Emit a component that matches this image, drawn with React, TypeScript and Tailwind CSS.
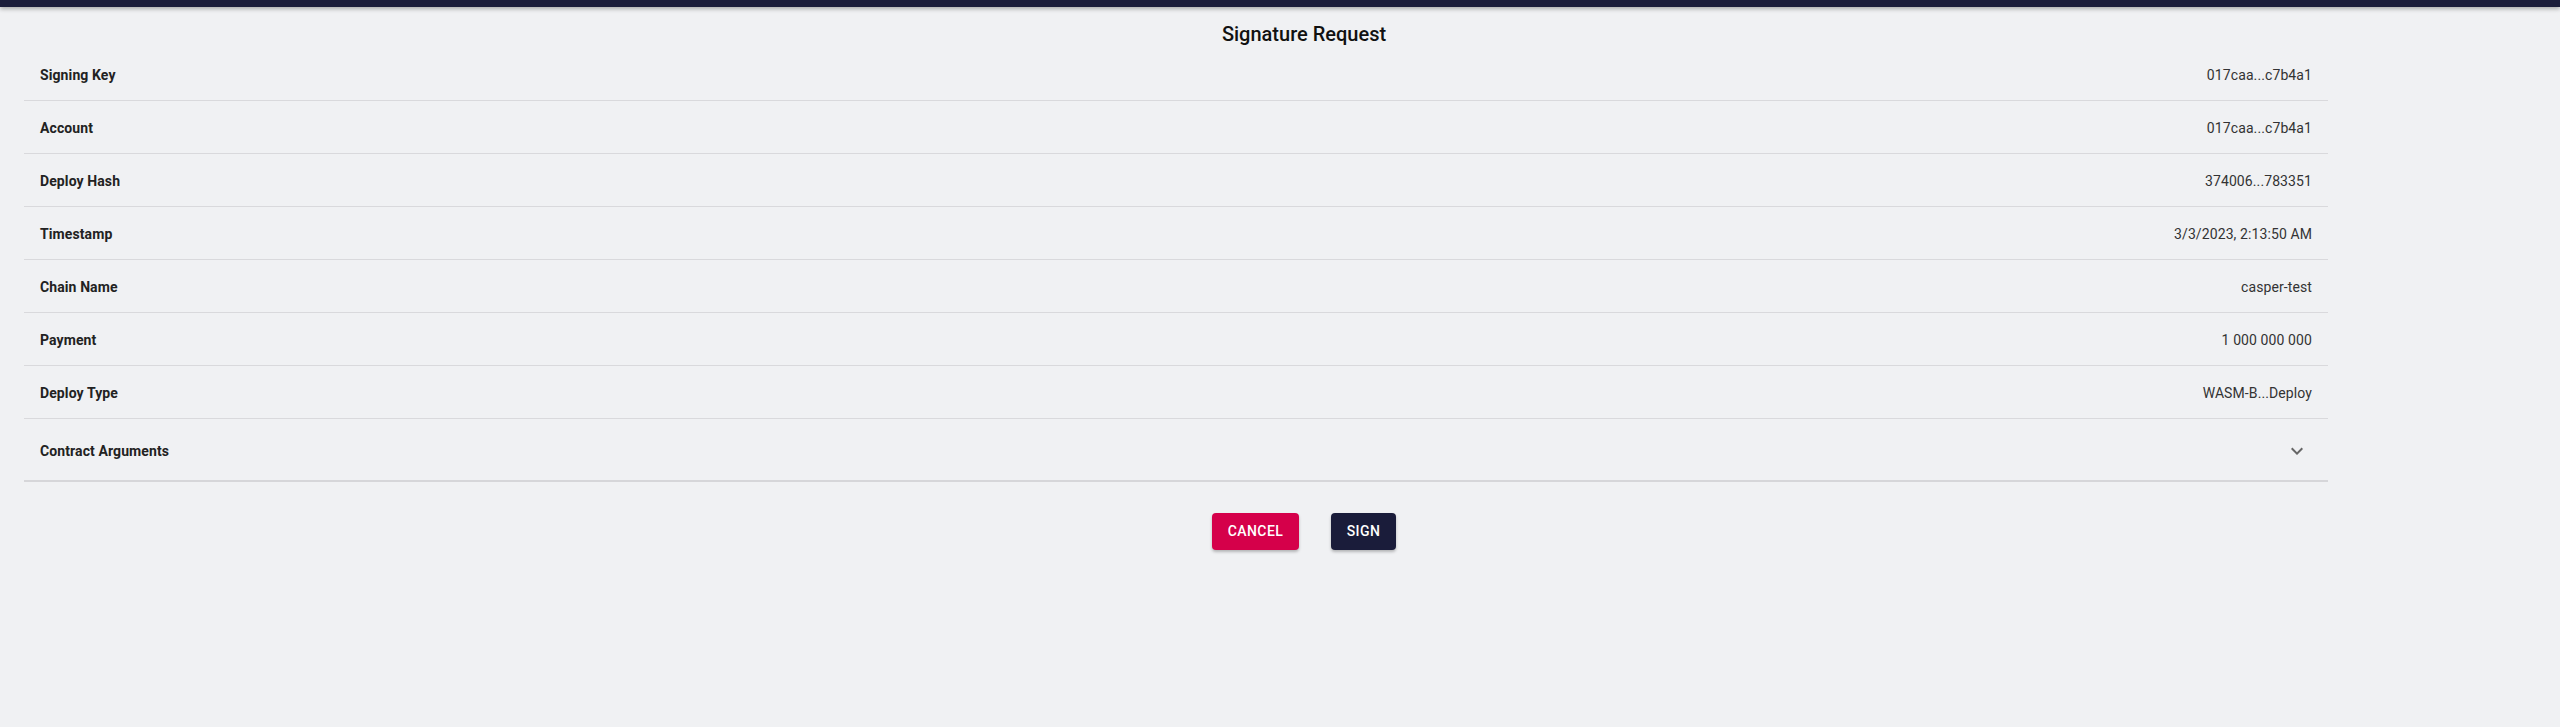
import React from "react";

const rows: [string, string][] = [
  ["Signing Key", "017caa...c7b4a1"],
  ["Account", "017caa...c7b4a1"],
  ["Deploy Hash", "374006...783351"],
  ["Timestamp", "3/3/2023, 2:13:50 AM"],
  ["Chain Name", "casper-test"],
  ["Payment", "1 000 000 000"],
  ["Deploy Type", "WASM-B...Deploy"],
];

export default function App() {
  return (
    <div
      className="min-h-[727px] w-[2560px] bg-[#f0f1f3] text-[#222]"
      style={{ fontFamily: "Roboto, 'Liberation Sans', sans-serif" }}
    >
      <div className="h-[7px] bg-[#1a1c3a] shadow-[0_2px_4px_rgba(0,0,0,0.3)]" />
      <div className="pl-[48px] h-[41px] pt-[17px] flex justify-center">
        <h1 className="text-[20px] font-medium text-[#111] leading-none">Signature Request</h1>
      </div>
      <div className="ml-[24px] w-[2304px]">
        {rows.map(([k, v]) => (
          <div
            key={k}
            className="h-[53px] pt-[2px] flex items-center justify-between px-[16px] border-b border-[#d9d9dc] text-[14px]"
          >
            <span className="font-bold text-[#222] tracking-[0.1px]">{k}</span>
            <span className="text-[#333] tracking-[0.1px]">{v}</span>
          </div>
        ))}
        <div className="h-[63px] pt-[3px] flex items-center justify-between px-[16px] border-b-2 border-[#d6d6d9] text-[14px]">
          <span className="font-bold text-[#222] tracking-[0.1px]">Contract Arguments</span>
          <svg width="24" height="24" viewBox="0 0 24 24" className="mr-[3px] text-[#666]">
            <path d="M16.59 8.59 12 13.17 7.41 8.59 6 10l6 6 6-6z" fill="currentColor" />
          </svg>
        </div>
      </div>
      <div className="pl-[48px] mt-[31px] flex justify-center gap-[32px]">
        <button className="h-[37px] w-[87px] rounded-[4px] bg-[#d5004a] text-white text-[14px] font-medium tracking-[0.4px] shadow-[0_2px_3px_rgba(0,0,0,0.25)]">
          CANCEL
        </button>
        <button className="h-[37px] w-[65px] rounded-[4px] bg-[#1a1c3a] text-white text-[14px] font-medium tracking-[0.4px] shadow-[0_2px_3px_rgba(0,0,0,0.25)]">
          SIGN
        </button>
      </div>
    </div>
  );
}
